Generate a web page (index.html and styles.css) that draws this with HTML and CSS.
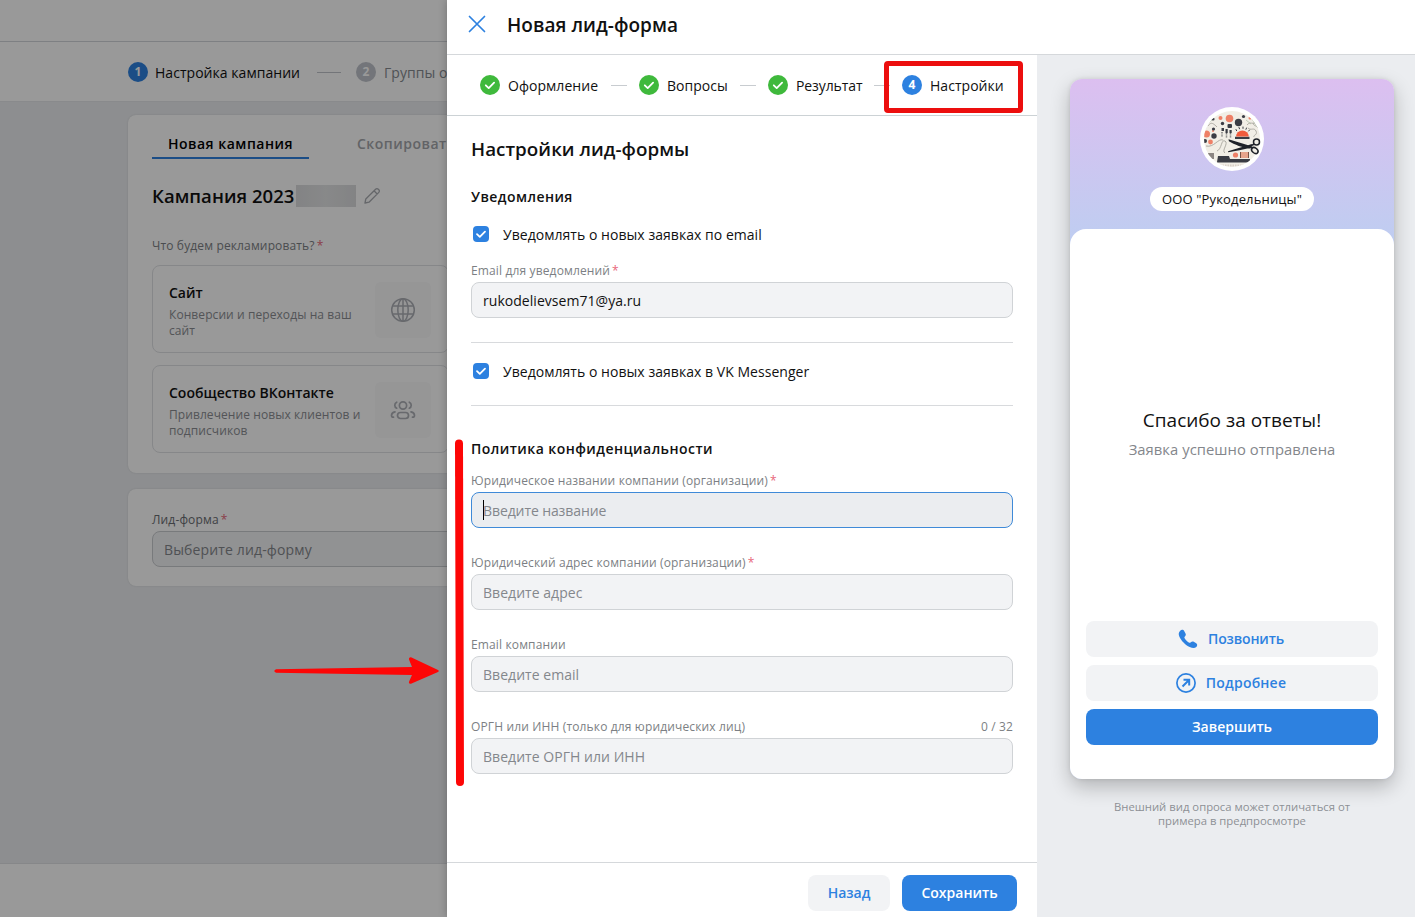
FILE: index.html
```html
<!DOCTYPE html>
<html lang="ru">
<head>
    <meta charset="UTF-8">
    <meta name="viewport" content="width=device-width, initial-scale=1.0">
    <title>Новая лид-форма</title>
    <link rel="stylesheet" href="styles.css">
</head>
<body>
    <!-- Страница кампании -->
    <div class="page">
        <div class="topbar"></div>
        <div class="page-steps">
            <div class="step-num">1</div>
            <span class="page-step-1">Настройка кампании</span>
            <div class="page-line"></div>
            <div class="step-num gray">2</div>
            <span class="page-step-2">Группы о</span>
        </div>
        <div class="page-body">
            <div class="card campaign">
                <div class="tabs">
                    <div class="tab active"><span>Новая кампания</span></div>
                    <div class="tab"><span>Скопироват</span></div>
                </div>
                <div class="campaign-name">
                    <span>Кампания 2023</span>
                    <div class="blurred"></div>
                    <svg width="18" height="18" viewBox="0 0 18 18" fill="none" stroke="#a9acb1" stroke-width="1.3" stroke-linejoin="round"><path d="M2 16l.8-4L12.6 2.200a1.900 1.900 0 0 1 2.700 0l.5.5a1.900 1.900 0 0 1 0 2.700L6 15.200zM11 3.800l3.200 3.200"/></svg>
                </div>
                <div class="label what">Что будем рекламировать? <i>*</i></div>
                <div class="option">
                    <div class="option-text">
                        <b>Сайт</b>
                        <p>Конверсии и переходы на ваш<br>сайт</p>
                    </div>
                    <div class="option-icon">
                        <svg width="26" height="26" viewBox="0 0 26 26" fill="none" stroke="#adb0b6" stroke-width="1.5"><circle cx="13" cy="13" r="11.300"/><ellipse cx="13" cy="13" rx="5.200" ry="11.300"/><path d="M13 1.700v22.600M2.800 9h20.400M2.800 17h20.400"/></svg>
                    </div>
                </div>
                <div class="option">
                    <div class="option-text">
                        <b>Сообщество ВКонтакте</b>
                        <p>Привлечение новых клиентов и<br>подписчиков</p>
                    </div>
                    <div class="option-icon">
                        <svg width="26" height="20" viewBox="0 0 26 20" fill="none" stroke="#adb0b6" stroke-width="1.700" stroke-linecap="round"><circle cx="13" cy="5.500" r="3.600"/><rect x="7.500" y="12.500" width="11" height="6" rx="3"/><path d="M6.700 2.200a3.300 3.300 0 0 0 0 6M19.300 2.200a3.300 3.300 0 0 1 0 6M5 11.800c-2.200.4-3.500 2-3.500 3.700 0 1 .8 1.700 2 1.700M21 11.800c2.200.4 3.500 2 3.500 3.700 0 1-.8 1.700-2 1.700"/></svg>
                    </div>
                </div>
            </div>
            <div class="card leadform">
                <div class="label dark">Лид-форма <i>*</i></div>
                <div class="select">Выберите лид-форму</div>
            </div>
        </div>
        <div class="page-footer"></div>
    </div>
    <div class="overlay"></div>

    <!-- Панель новой лид-формы -->
    <div class="drawer">
        <div class="drawer-header">
            <svg width="18" height="18" viewBox="0 0 18 18" stroke="#2d81e0" stroke-width="1.700" stroke-linecap="round"><path d="M1.500 1.500l15 15M16.500 1.500l-15 15"/></svg>
            <h1>Новая лид-форма</h1>
        </div>
        <div class="drawer-body">
            <div class="main">
                <div class="steps">
                    <div class="step s1"><svg class="done" viewBox="0 0 20 20"><circle cx="10" cy="10" r="10"/><path d="M5.800 10.300l2.900 2.800 5.400-5.400"/></svg><span>Оформление</span></div>
                    <div class="step s2"><svg class="done" viewBox="0 0 20 20"><circle cx="10" cy="10" r="10"/><path d="M5.800 10.300l2.900 2.800 5.400-5.400"/></svg><span>Вопросы</span></div>
                    <div class="step s3"><svg class="done" viewBox="0 0 20 20"><circle cx="10" cy="10" r="10"/><path d="M5.800 10.300l2.900 2.800 5.400-5.400"/></svg><span>Результат</span></div>
                    <div class="step s4"><div class="step-num">4</div><span>Настройки</span></div>
                </div>
                <div class="form">
                    <h2>Настройки лид-формы</h2>
                    <h3 class="notify">Уведомления</h3>
                    <div class="check">
                        <svg viewBox="0 0 16 16"><rect width="16" height="16" rx="4"/><path d="M4 8.200l2.800 2.700 5.200-5.200"/></svg>
                        <span>Уведомлять о новых заявках по email</span>
                    </div>
                    <div class="field f-mail">
                        <div class="label">Email для уведомлений <i>*</i></div>
                        <div class="input filled">rukodelievsem71@ya.ru</div>
                    </div>
                    <div class="divider"></div>
                    <div class="check">
                        <svg viewBox="0 0 16 16"><rect width="16" height="16" rx="4"/><path d="M4 8.200l2.800 2.700 5.200-5.200"/></svg>
                        <span>Уведомлять о новых заявках в VK Messenger</span>
                    </div>
                    <div class="divider"></div>
                    <h3 class="policy">Политика конфиденциальности</h3>
                    <div class="field">
                        <div class="label">Юридическое названии компании (организации) <i>*</i></div>
                        <div class="input focus"><div class="caret"></div>Введите название</div>
                    </div>
                    <div class="field">
                        <div class="label">Юридический адрес компании (организации) <i>*</i></div>
                        <div class="input">Введите адрес</div>
                    </div>
                    <div class="field">
                        <div class="label">Email компании</div>
                        <div class="input">Введите email</div>
                    </div>
                    <div class="field">
                        <div class="label"><span>ОРГН или ИНН (только для юридических лиц)</span><span>0 / 32</span></div>
                        <div class="input">Введите ОРГН или ИНН</div>
                    </div>
                </div>
                <div class="actions">
                    <div class="btn back"><span>Назад</span></div>
                    <div class="btn primary save"><span>Сохранить</span></div>
                </div>
            </div>
            <div class="preview">
                <div class="phone">
                    <svg class="avatar" viewBox="0 0 64 64">
                        <clipPath id="round"><circle cx="32" cy="32" r="28"/></clipPath>
                        <circle cx="32" cy="32" r="32" fill="#fff"/>
                        <g clip-path="url(#round)">
                            <rect width="64" height="64" fill="#f1eee6"/>
                            <g fill="#ee8067">
                                <circle cx="29.500" cy="11.500" r="3.800"/><circle cx="20.500" cy="11" r="2"/><circle cx="6.500" cy="27" r="3.500"/><circle cx="10.500" cy="35" r="2.400"/><circle cx="35.500" cy="48" r="2.600"/><circle cx="50" cy="11" r="1.500"/><circle cx="13" cy="24" r="1"/>
                            </g>
                            <g fill="#3a3c44">
                                <circle cx="38.500" cy="15.500" r="3.700"/><circle cx="14" cy="29" r="2.700"/><circle cx="5" cy="34" r="2"/><circle cx="22.500" cy="16.500" r="1.700"/><circle cx="13.500" cy="22" r="1.600"/><circle cx="43.500" cy="9.500" r="1.600"/><circle cx="13" cy="12" r="1.600"/><rect x="27.500" y="17" width="4.500" height="4" rx="1"/><rect x="21.500" y="21" width="2.500" height="3"/><rect x="25.500" y="22" width="2.200" height="4"/><rect x="29.500" y="23" width="2.200" height="3"/>
                                <path d="M35 32v-2.200h14.500V32zM17 55l1-6h11l1 3h20v3.500H17z"/>
                                <path d="M8 46h6v6H8z" fill="#8b8582"/>
                            </g>
                            <path d="M36 29.500a6.300 6 0 0 1 12.800 0z" fill="#f15b3c"/>
                            <path d="M41 45h8v6h-8z" fill="#e7a48c"/><path d="M40.500 45v6M48.500 45v6" stroke="#775246" fill="none"/>
                            <path d="M36 22.500l.6 1.200M39 20.500l.5 1.300M43 20v1.400M46.500 21l-.5 1.300M49.500 23l-.8 1" stroke="#3a3c44" stroke-linecap="round" fill="none"/>
                            <path d="M22 25v5M26.500 26v5M30.500 26v5" stroke="#777" stroke-width="1.500" stroke-dasharray="1 .6" fill="none"/>
                            <path d="M8 19c3-5 6-2 9 1M6 39c8 2 12-8 17-6M17 44c5-2 4-12 8-10s-4 10 0 12M47 18c3-4 6 0 9-3M48 21c3 3 6-1 8 3s-3 4-2 6M53 16c1 4 4 2 5 5" stroke="#a8a69e" stroke-width=".9" fill="none"/>
                            <path d="M7 17l5-4M46 13l5 4M52 12l5 8" stroke="#a8b9a1" stroke-width=".7" fill="none"/>
                            <path d="M20 58.500h27" stroke="#d9d0c8" stroke-width="2" stroke-dasharray="1.500 1" fill="none"/>
                        </g>
                        <g fill="#1f2229"><path d="M28.500 32.300l23 6.900-1 2.400c-8-.7-16-4-21.600-7.300zM28 44.300l24-7.300-1.500 3.800c-7 1.700-15 3.500-22.200 4.400z"/></g>
                        <g fill="none" stroke="#1f2229" stroke-width="1.500"><circle cx="56.500" cy="35" r="3"/><ellipse cx="54.800" cy="43.500" rx="3.600" ry="2.500" transform="rotate(38 54.800 43.500)"/><path d="M49 39.500l5-2.300M49 39l4 2"/></g>
                    </svg>
                    <div class="company"><span>ООО "Рукодельницы"</span></div>
                    <div class="sheet">
                        <div class="thanks">
                            <div class="thanks-title">Спасибо за ответы!</div>
                            <div class="thanks-text">Заявка успешно отправлена</div>
                        </div>
                        <div class="btn call"><svg width="20" height="20" viewBox="0 0 20 20" fill="#2d81e0"><path d="M2.200 1.700C3.700.3 5.500.8 6.300 2.200l1.200 2.300c.6 1.200.3 2-.6 3-.7.8-.6 1.300-.1 2.100 1 1.600 2.500 3 4 3.900.8.500 1.300.4 2-.2.900-.9 1.900-1.100 3-.5l2 1.100c1.600.9 1.900 2.700.5 4.100-1.500 1.500-3.800 1.400-6.600.1C7.500 16.200 3 11.600 1.300 7.500.3 5 .7 3.100 2.200 1.700z"/></svg><span>Позвонить</span></div>
                        <div class="btn more"><svg width="20" height="20" viewBox="0 0 20 20" fill="none" stroke="#2d81e0" stroke-width="1.700"><circle cx="10" cy="10" r="9.100"/><path d="M6.500 13.500l6.500-6.500M7.500 6.800h5.700v5.700" stroke-width="2"/></svg><span>Подробнее</span></div>
                        <div class="btn primary finish"><span>Завершить</span></div>
                    </div>
                </div>
                <div class="hint">Внешний вид опроса может отличаться от<br>примера в предпросмотре</div>
            </div>
        </div>
    </div>

    <!-- Пометки -->
    <div class="mark-box"></div>
    <svg class="mark-bar" width="12" height="350" viewBox="0 0 12 350" stroke="#fd0606" stroke-width="8" stroke-linecap="round"><path d="M5 5.500l1 338.500"/></svg>
    <svg class="mark-arrow" width="168" height="30" viewBox="0 0 168 30" fill="#fd0606"><path d="M3 13.300L139 11l-3-7.500q-.5-2.500 2-2.300L165 14q1.500 1 0 2L138 27.800q-2.500.3-2-2L139 19 3 16.800q-3.500-1.700 0-3.500z"/></svg>
</body>
</html>
```

FILE: styles.css
```css
* {
    box-sizing: border-box;
}

body {
    margin: 0;
    width: 1415px;
    height: 917px;
    overflow: hidden;
    font-family: "Open Sans", "Noto Sans", sans-serif;
    font-size: 14px;
    letter-spacing: 0.04px;
    color: #111;
    background: #ebedf0;
}

h1, h2, h3, p {
    margin: 0;
    font-weight: 600;
}

svg {
    display: block;
    flex: none;
}

span {
    white-space: nowrap;
}

.page {
    display: flex;
    flex-direction: column;
    height: 917px;
    width: 500px;
    overflow: hidden;
}

.topbar {
    height: 42px;
    background: #fff;
    border-bottom: 1px solid #d3d6da;
}

.page-steps {
    display: flex;
    align-items: center;
    height: 60px;
    padding: 1px 0 0 128px;
    background: #fff;
    border-bottom: 1px solid #e4e6e9;
}

.page-steps .gray {
    background: #c0c4cb;
}

.step-num {
    flex: none;
    width: 20px;
    height: 20px;
    line-height: 20px;
    border-radius: 50%;
    background: #2d81e0;
    color: #fff;
    text-align: center;
    font-size: 12px;
    font-weight: 700;
}

.page-step-1 {
    flex: none;
    width: 145px;
    margin-left: 7px;
}

.page-line {
    flex: none;
    width: 24px;
    height: 1px;
    margin: 0 15px 0 17px;
    background: #c0c4ca;
}

.page-step-2 {
    margin-left: 8px;
    color: #858a90;
}

.page-body {
    flex: 1;
    padding: 13px 0 0 128px;
}

.card {
    background: #fff;
    border-radius: 8px;
    padding-left: 24px;
    box-shadow: 0 0 2px rgba(0, 0, 0, 0.12);
}

.campaign {
    height: 358px;
    padding-top: 15px;
}

.tabs {
    display: flex;
    gap: 32px;
}

.tab {
    height: 29px;
    line-height: 27px;
    padding: 0 16px;
    font-weight: 600;
    letter-spacing: 0.5px;
    color: #a3a6ab;
}

.tab.active {
    width: 157px;
    color: #000;
    border-bottom: 2px solid #2d81e0;
}

.campaign-name {
    display: flex;
    align-items: center;
    height: 28px;
    margin-top: 23px;
    font-size: 18.5px;
    font-weight: 600;
}

.campaign-name span {
    padding-bottom: 2px;
}

.campaign-name svg {
    margin-left: 7px;
}

.blurred {
    width: 60px;
    height: 22px;
    margin-left: 2px;
    background: linear-gradient(90deg, #dadbdd, #e3e4e5 50%, #dadbdd);
}

.label {
    display: flex;
    height: 18px;
    line-height: 18px;
    font-size: 12px;
    letter-spacing: 0.14px;
    color: #7c7f84;
}

.label span:last-child {
    margin-left: auto;
}

.label i {
    font-style: normal;
    color: #e8667a;
    margin-left: 2px;
}

.label.dark {
    color: #6a6d72;
}

.what {
    margin-top: 27px;
}

.option {
    display: flex;
    justify-content: space-between;
    width: 297px;
    height: 88px;
    margin-top: 10px;
    padding: 16px 17px 16px 16px;
    border: 1px solid #e0e2e5;
    border-radius: 8px;
}

.option + .option {
    margin-top: 12px;
}

.option b {
    display: block;
    line-height: 22px;
    font-weight: 600;
    letter-spacing: 0;
}

.option p {
    margin-top: 3px;
    line-height: 16px;
    font-size: 12px;
    font-weight: 400;
    letter-spacing: 0.08px;
    color: #8a8d92;
}

.option-icon {
    display: flex;
    align-items: center;
    justify-content: center;
    width: 56px;
    height: 56px;
    border-radius: 6px;
    background: #fafafb;
}

.leadform {
    height: 97px;
    margin-top: 16px;
    padding-top: 22px;
}

.select {
    height: 36px;
    margin-top: 2px;
    padding: 1px 0 0 11px;
    line-height: 34px;
    letter-spacing: 0.14px;
    color: #84878c;
    background: #f2f3f5;
    border: 1px solid #c9cccf;
    border-radius: 8px;
}

.page-footer {
    height: 54px;
    background: #fff;
    border-top: 1px solid #e0e2e5;
}

.overlay {
    position: absolute;
    top: 0;
    left: 0;
    width: 447px;
    height: 917px;
    background: rgba(0, 0, 0, 0.4);
}

.drawer {
    position: absolute;
    top: 0;
    left: 447px;
    width: 968px;
    height: 917px;
    display: flex;
    flex-direction: column;
    background: #fff;
    box-shadow: 0 0 8px rgba(0, 0, 0, 0.25);
}

.drawer-header {
    display: flex;
    align-items: center;
    gap: 21px;
    height: 55px;
    padding: 0 0 6px 21px;
    border-bottom: 1px solid #d5d8db;
}

h1 {
    padding-top: 2px;
    font-size: 19px;
    line-height: 28px;
}

.drawer-body {
    display: flex;
    flex: 1;
}

.main {
    display: flex;
    flex-direction: column;
    width: 590px;
}

.steps {
    display: flex;
    align-items: center;
    height: 61px;
    padding-left: 33px;
    border-bottom: 1px solid #ccd2d5;
}

.step {
    display: flex;
    align-items: center;
    gap: 8px;
}

.step + .step::before {
    content: "";
    width: 16px;
    height: 1px;
    margin-right: 4px;
    background: #c8ccd0;
}

.s1 {
    width: 131px;
}

.s2 {
    width: 129px;
}

.s3 {
    width: 134px;
    letter-spacing: -0.1px;
}

.done {
    width: 20px;
    height: 20px;
    fill: #3fb93c;
}

.done path,
.check path {
    fill: none;
    stroke: #fff;
    stroke-width: 1.8;
    stroke-linecap: round;
    stroke-linejoin: round;
}

.form {
    flex: 1;
    padding: 19px 24px 0;
}

h2 {
    font-size: 18.8px;
    line-height: 28px;
}

h3 {
    font-size: 14px;
    line-height: 20px;
    letter-spacing: 0.45px;
}

.notify {
    margin-top: 24px;
}

.check {
    display: flex;
    align-items: center;
    height: 20px;
    gap: 14px;
    margin: 17px 0 18px 2px;
}

.divider + .check {
    margin-top: 18px;
}

.check svg {
    width: 16px;
    height: 16px;
    fill: #2d81e0;
}

.divider {
    height: 1px;
    margin-top: 24px;
    background: #d8dadd;
}

.policy {
    margin: 33px 0 13px;
}

.field {
    margin-bottom: 26px;
}

.f-mail {
    margin-bottom: 24px;
}

.input {
    display: flex;
    align-items: center;
    height: 36px;
    margin-top: 2px;
    padding: 0 11px;
    color: #84878c;
    background: #f2f3f5;
    border: 1px solid #d0d3d6;
    border-radius: 8px;
}

.filled {
    color: #111;
}

.focus {
    background: #ebedf0;
    border-color: #3f8ad8;
    letter-spacing: -0.1px;
}

.caret {
    width: 1px;
    height: 20px;
    margin-right: -1px;
    background: #000;
}

.actions {
    display: flex;
    justify-content: flex-end;
    gap: 12px;
    height: 55px;
    padding: 12px 20px 0;
    border-top: 1px solid #d5d8db;
}

.btn {
    display: flex;
    align-items: center;
    justify-content: center;
    gap: 10px;
    height: 36px;
    border-radius: 8px;
    background: #f2f3f5;
    color: #2d81e0;
    font-weight: 600;
    letter-spacing: 0;
}

.btn span {
    padding-bottom: 2px;
}

.primary {
    background: #2d81e0;
    color: #fff;
}

.back {
    width: 82px;
}

.save {
    width: 115px;
}

.call {
    letter-spacing: -0.15px;
    padding-right: 2px;
}

.more {
    letter-spacing: 0.2px;
    padding-right: 2px;
}

.preview {
    flex: 1;
    padding: 24px 21px 0 33px;
    background: #ebedf0;
}

.phone {
    display: flex;
    flex-direction: column;
    align-items: center;
    height: 700px;
    padding-top: 28px;
    border-radius: 12px;
    overflow: hidden;
    background: linear-gradient(#dcbff0, #bfcdf1 160px);
    box-shadow: 0 8px 20px rgba(0, 0, 0, 0.24), 0 0 4px rgba(0, 0, 0, 0.1);
}

.avatar {
    width: 64px;
    height: 64px;
}

.company {
    display: flex;
    align-items: center;
    justify-content: center;
    width: 164px;
    height: 24px;
    margin: 16px 0 18px;
    border-radius: 12px;
    background: #fff;
    font-size: 13px;
    letter-spacing: 0.15px;
}

.sheet {
    display: flex;
    flex: 1;
    flex-direction: column;
    gap: 8px;
    width: 324px;
    padding: 0 16px 34px;
    border-radius: 16px 16px 0 0;
    background: #fff;
}

.thanks {
    flex: 1;
    padding-top: 177px;
    text-align: center;
}

.thanks-title {
    font-size: 19px;
    line-height: 28px;
    letter-spacing: 0;
}

.thanks-text {
    margin-top: 5px;
    font-size: 14.8px;
    line-height: 20px;
    color: #84878c;
}

.hint {
    margin-top: 21px;
    text-align: center;
    font-size: 11.3px;
    line-height: 14px;
    letter-spacing: 0;
    color: #8d9095;
}

.mark-box {
    position: absolute;
    left: 884px;
    top: 61px;
    width: 139px;
    height: 52px;
    border: 5px solid #ec0e0e;
    border-radius: 4px;
}

.mark-bar {
    position: absolute;
    left: 454px;
    top: 438px;
}

.mark-arrow {
    position: absolute;
    left: 273px;
    top: 656px;
}
```
